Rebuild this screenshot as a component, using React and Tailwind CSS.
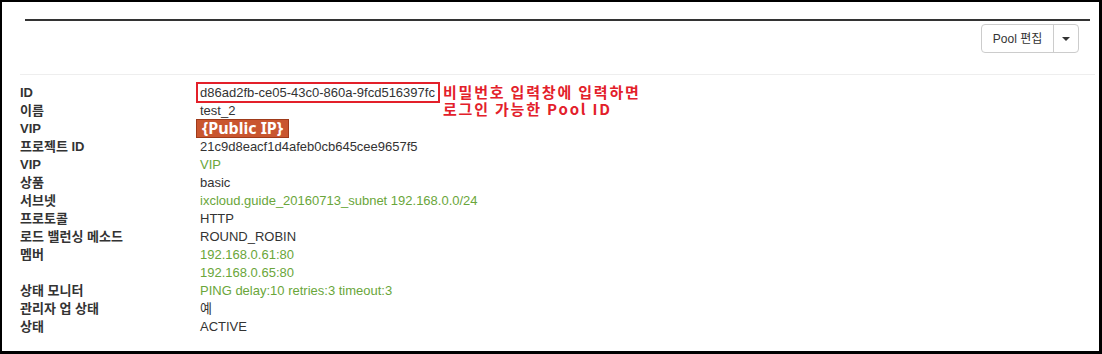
import React from "react";

const F = { fontFamily: '"Liberation Sans", "Noto Sans CJK KR", Arial, sans-serif' };

function Row({ label, children }) {
  return (
    <div className="flex h-[18px] leading-[18px]">
      <div className="w-[180px] shrink-0 font-bold text-[13px] text-[#333]">{label}</div>
      <div className="text-[13px] text-[#333]">{children}</div>
    </div>
  );
}

const G = ({ children }) => <span className="text-[#6aa63a]">{children}</span>;

export default function App() {
  return (
    <div
      className="w-[1102px] h-[354px] bg-white border-black border-l-2 border-t-2 border-r-[3px] border-b-[3px] relative overflow-hidden"
      style={F}
    >
      <div className="ml-[23px] mr-[9px] mt-[17px] h-[2px] bg-[#333]" />
      <div className="flex justify-end pr-[20px] mt-[3px]">
        <div className="flex h-[29px] border border-[#ccc] rounded-[4px] text-[12px] text-[#333]">
          <div className="w-[72px] flex items-center justify-center border-r border-[#ccc]">Pool 편집</div>
          <div className="w-[24px] flex items-center justify-center">
            <svg width="8" height="4" viewBox="0 0 8 4">
              <path d="M0 0 L8 0 L4 4 Z" fill="#333" />
            </svg>
          </div>
        </div>
      </div>
      <div className="ml-[18px] mr-[4px] mt-[21px] h-px bg-[#eee]" />
      <div className="pl-[18px] mt-[9px] relative">
        <Row label="ID">
          <span className="relative inline-block">
            d86ad2fb-ce05-43c0-860a-9fcd516397fc
            <span className="absolute left-[-4px] right-[-5px] top-[-2px] bottom-[-1px] border-2 border-[#e3202a]" />
          </span>
        </Row>
        <Row label="이름">test_2</Row>
        <Row label="VIP">
          <span className="relative inline-block w-[90px] h-[18px]">
            <span
              className="absolute left-[-4px] top-[-1px] w-[93px] h-[19px] bg-[#c9562f] border border-[#9e3a1a] text-white font-bold text-[16px] leading-[17px] flex items-center justify-center"
              style={{ fontFamily: '"Noto Sans", "Open Sans", sans-serif' }}
            >
              {"{Public IP}"}
            </span>
          </span>
        </Row>
        <Row label="프로젝트 ID">21c9d8eacf1d4afeb0cb645cee9657f5</Row>
        <Row label="VIP"><G>VIP</G></Row>
        <Row label="상품">basic</Row>
        <Row label="서브넷"><G>ixcloud.guide_20160713_subnet 192.168.0.0/24</G></Row>
        <Row label="프로토콜">HTTP</Row>
        <Row label="로드 밸런싱 메소드">ROUND_ROBIN</Row>
        <Row label="멤버"><G>192.168.0.61:80</G></Row>
        <Row label=""><G>192.168.0.65:80</G></Row>
        <Row label="상태 모니터"><G>PING delay:10 retries:3 timeout:3</G></Row>
        <Row label="관리자 업 상태">예</Row>
        <Row label="상태">ACTIVE</Row>
        <div
          className="absolute left-[441px] top-[-1px] text-[#e3202a] font-bold text-[15px] leading-[17px] tracking-[1.8px]"
          style={{ fontFamily: '"Noto Sans CJK KR", sans-serif' }}
        >
          <div className="h-[17px]">비밀번호 입력창에 입력하면</div>
          <div className="h-[17px]">로그인 가능한 Pool ID</div>
        </div>
      </div>
    </div>
  );
}
